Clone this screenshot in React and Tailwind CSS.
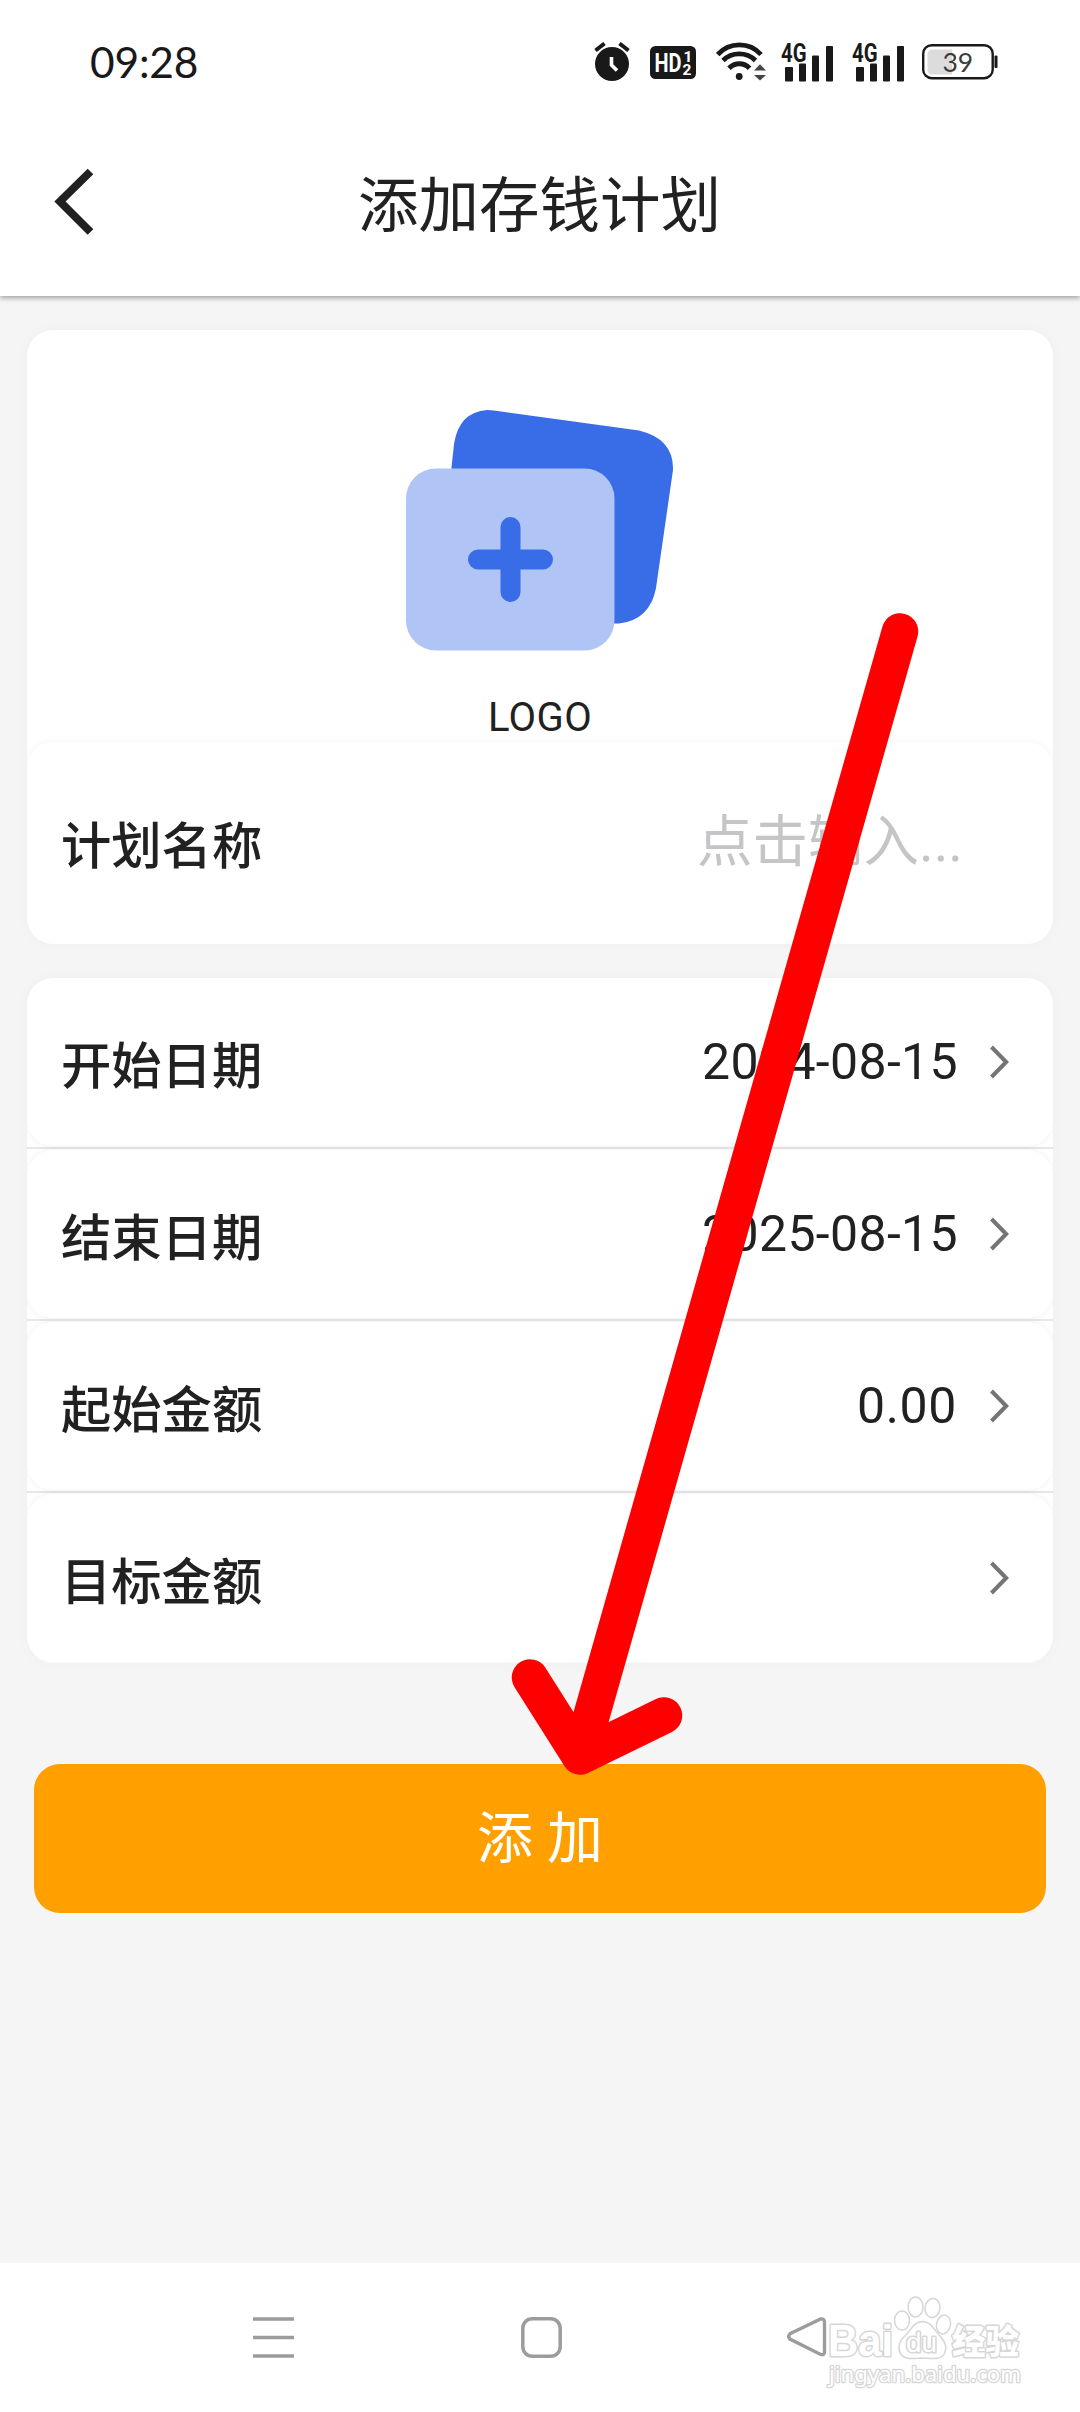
const CJK = "font-['Roboto','Noto_Sans_CJK_SC',sans-serif]";

function AlarmIcon() {
  return (
    <svg width="36" height="40" viewBox="0 0 36 40" className="shrink-0">
      <circle cx="18" cy="22" r="17" fill="#191919" />
      <path d="M1.500 8.500 10.500 1.500M34.500 8.500 25.500 1.500" stroke="#191919" strokeWidth="4" fill="none" />
      <path d="M17.500 15v8l5.500 5.500" stroke="#fff" strokeWidth="3.600" fill="none" />
    </svg>
  );
}

function HdIcon() {
  return (
    <svg width="46" height="33" viewBox="0 0 46 33" className="shrink-0">
      <rect width="46" height="33" rx="5.500" fill="#191919" />
      <g fill="#fff" fontFamily="Roboto, sans-serif" fontWeight="700">
        <text x="4.500" y="26" fontSize="25.500" textLength="27" lengthAdjust="spacingAndGlyphs">HD</text>
        <text x="33.500" y="15.500" fontSize="15.500">1</text>
        <text x="32.500" y="29" fontSize="15.500">2</text>
      </g>
    </svg>
  );
}

function WifiIcon() {
  return (
    <svg width="50" height="40" viewBox="0 0 50 40" className="shrink-0">
      <g fill="none" stroke="#191919" strokeWidth="4.800">
        <path d="M1.700 12.500C13.500-.3 33.500-.3 45 12.500" />
        <path d="M7 18.500c9-8.800 23.500-8.800 32.500 0" />
        <path d="M13 26.300c5.800-6 15-6 20.500 0" strokeWidth="5" />
      </g>
      <circle cx="23.200" cy="34.500" r="3.400" fill="#191919" />
      <path d="m38 28.500 6-6.300 6 6.300z" fill="#444" />
      <path d="m38 33 6 5.500 6-5.500z" fill="#444" />
    </svg>
  );
}

function SignalIcon() {
  return (
    <svg width="53" height="51" viewBox="0 -6 53 51" className="shrink-0">
      <g fill="#191919">
        <rect x="4" y="24" width="8" height="14.500" rx="1" />
        <rect x="18" y="20.500" width="7" height="18" rx="1" />
        <rect x="31" y="12.500" width="7" height="26" rx="1" />
        <rect x="45" y="3" width="7" height="35.500" rx="1" />
        <text x="0" y="18.500" fontFamily="Roboto, sans-serif" fontSize="25" fontWeight="700" textLength="25.500" lengthAdjust="spacingAndGlyphs" stroke="#fff" strokeWidth="2" paintOrder="stroke">4G</text>
      </g>
    </svg>
  );
}

function BatteryIcon() {
  return (
    <svg width="76" height="36" viewBox="0 0 76 36" className="shrink-0">
      <rect x="1.200" y="1.200" width="69.500" height="33" rx="8.500" fill="#fff" stroke="#191919" strokeWidth="2.400" />
      <path d="M10 5.500h20v25H10a4.500 4.500 0 0 1-4.500-4.500V10A4.500 4.500 0 0 1 10 5.500z" fill="#dcdcdc" />
      <rect x="72.500" y="11.500" width="3" height="12.500" rx="1" fill="#191919" />
      <text x="20.500" y="27.500" fontFamily="Lato, sans-serif" fontSize="26.500" fill="#3c3c3c">39</text>
    </svg>
  );
}

function Chevron() {
  return (
    <svg width="22" height="34" viewBox="0 0 22 34" className="shrink-0">
      <path d="M2.500 2 17.200 17 2.500 32" fill="none" stroke="#757575" strokeWidth="4" />
    </svg>
  );
}

function PlanLogo() {
  return (
    <svg width="268" height="242" viewBox="0 0 268 242" className="shrink-0">
      <path d="M45 62 48 34Q53 2 81 0Q85 0 88 .5L233 20.500Q268 29 267 60L250 178Q244 210 213 213.500H190L45 100Z" fill="#396de8" />
      <rect x="0" y="58.500" width="208.500" height="182" rx="30" fill="#b1c4f6" />
      <path d="M104.500 117v65M72 149.500h65" stroke="#396de8" strokeWidth="20" strokeLinecap="round" />
    </svg>
  );
}

function Row({ label, children }) {
  return (
    <div className="flex h-[168px] items-center rounded-[26px] bg-white pl-[34px] pr-[42px] shadow-[0_0_9px_rgba(0,0,0,0.06)]">
      <span className="flex-1 pt-[9px] text-[50.300px] leading-[60px] font-medium">{label}</span>
      {children}
      <Chevron />
    </div>
  );
}

function DateValue({ children }) {
  return <span className="mr-[31px] text-[50px] leading-[60px] tracking-[0.35px]">{children}</span>;
}

function AmountValue({ children }) {
  return <span className="mr-[32px] text-[50px] leading-[60px] tracking-[0.6px]">{children}</span>;
}

function Divider() {
  return <div className="my-[1px] h-[2px] bg-[#e6e6e6]" />;
}

function Watermark() {
  return (
    <svg width="204" height="100" viewBox="0 0 204 100" className="absolute left-[824px] top-[2292px]">
      <g fill="#fff" stroke="#d6d6d6" strokeWidth="1.500">
        <ellipse cx="78" cy="28.500" rx="7.500" ry="9.500" />
        <ellipse cx="91.500" cy="15" rx="7.500" ry="10" />
        <ellipse cx="108.500" cy="16" rx="7.500" ry="9.500" transform="rotate(8 108.500 16)" />
        <ellipse cx="119.500" cy="32.500" rx="7" ry="9.500" transform="rotate(12 119.500 32.500)" />
        <path d="M98.500 29.500c-9 0-12 9-17 14-7 6-8 13-5 18 4 7 13 5 22 4.500 9 .5 18 2.500 22-4.500 3-6 1-12-5-18-5-5-8-14-17-14z" />
        <g strokeWidth="3" paintOrder="stroke" strokeLinejoin="round">
          <text x="4" y="64" fontFamily="Liberation Sans, sans-serif" fontWeight="700" fontSize="44" textLength="65" lengthAdjust="spacingAndGlyphs">Bai</text>
          <text x="82" y="60" fontFamily="Liberation Sans, sans-serif" fontWeight="400" fontSize="27" textLength="31" lengthAdjust="spacingAndGlyphs">du</text>
          <text x="128" y="62" fontFamily="Noto Sans CJK SC, sans-serif" fontWeight="900" fontSize="34" textLength="67" lengthAdjust="spacingAndGlyphs">经验</text>
          <text x="5" y="90" fontFamily="Noto Sans, sans-serif" fontSize="22" strokeWidth="2.600" textLength="192" lengthAdjust="spacingAndGlyphs">jingyan.baidu.com</text>
        </g>
      </g>
    </svg>
  );
}

export default function App() {
  return (
    <div className={`relative flex h-[2412px] w-[1080px] flex-col overflow-hidden bg-[#f5f5f5] text-[#212121] ${CJK}`}>
      <header className="h-[296px] shrink-0 bg-white shadow-[0_2px_5px_rgba(0,0,0,0.35)]">
        <div className="flex h-[124px] items-center pl-[90px] pr-[82px]">
          <span className="flex-1 font-['Lato',sans-serif] text-[42.500px] leading-none tracking-[-0.2px] text-[#191919]">09:28</span>
          <AlarmIcon />
          <div className="ml-[20px] flex"><HdIcon /></div>
          <div className="ml-[20px] flex"><WifiIcon /></div>
          <div className="ml-[15px] flex"><SignalIcon /></div>
          <div className="ml-[18px] flex"><SignalIcon /></div>
          <div className="ml-[17px] flex"><BatteryIcon /></div>
        </div>
        <div className="flex h-[156px] items-center">
          <svg width="44" height="70" viewBox="0 0 44 70" className="ml-[52px] shrink-0">
            <path d="M38.500 4.500 8 34.500 38.500 65" fill="none" stroke="#212121" strokeWidth="8" />
          </svg>
          <h1 className="mr-[97px] flex-1 pt-[9px] text-center text-[60.500px] leading-[80px]">添加存钱计划</h1>
        </div>
      </header>

      <main className="flex flex-1 flex-col px-[27px] pt-[34px]">
        <section className="flex h-[614px] flex-col overflow-hidden rounded-[26px] bg-white shadow-[0_0_12px_rgba(0,0,0,0.03)]">
          <div className="flex h-[412px] flex-col items-center pt-[80px]">
            <PlanLogo />
            <span className="mt-[42px] text-[40px] leading-[48px] tracking-[0.4px]">LOGO</span>
          </div>
          <div className="flex h-[202px] items-center rounded-[26px] bg-white pl-[34px] pr-[90px] shadow-[0_0_9px_rgba(0,0,0,0.05)]">
            <span className="flex-1 pt-[8px] text-[50.300px] leading-[60px] font-medium">计划名称</span>
            <span className="text-[55.500px] leading-[70px] text-[#c5c5c7]">点击输入...</span>
          </div>
        </section>

        <section className="mt-[34px] flex h-[685px] flex-col overflow-hidden rounded-[26px] bg-white shadow-[0_0_12px_rgba(0,0,0,0.03)]">
          <Row label="开始日期"><DateValue>2024-08-15</DateValue></Row>
          <Divider />
          <Row label="结束日期"><DateValue>2025-08-15</DateValue></Row>
          <Divider />
          <Row label="起始金额"><AmountValue>0.00</AmountValue></Row>
          <Divider />
          <Row label="目标金额" />
        </section>

        <button className="mx-[7px] mt-[101px] flex h-[149px] shrink-0 items-center justify-center rounded-[26px] bg-[#ffa000] text-[56px] text-white">
          添 加
        </button>
      </main>

      <nav className="flex h-[149px] shrink-0 items-center bg-white pl-[253px]">
        <svg width="41" height="41" viewBox="0 0 41 41">
          <path d="M0 2h41M0 20.500h41M0 39h41" stroke="#9c9c9c" strokeWidth="3.600" />
        </svg>
        <svg width="41" height="41" viewBox="0 0 41 41" className="ml-[227px]">
          <rect x="1.800" y="1.800" width="37.400" height="37.400" rx="9.500" fill="none" stroke="#9c9c9c" strokeWidth="3.500" />
        </svg>
        <svg width="41" height="41" viewBox="0 0 41 41" className="ml-[225px]">
          <path d="M1.500 17 33.500 1.500Q37.500 1 37.500 5V36Q37.500 39.500 33.500 38.500L1.500 22.500Q-1 19.500 1.500 17Z" transform="translate(1.500 .5) scale(.96)" fill="none" stroke="#9c9c9c" strokeWidth="3.500" />
        </svg>
      </nav>

      <Watermark />

      <svg width="420" height="1190" viewBox="500 600 420 1190" className="absolute left-[500px] top-[600px]">
        <path d="M900 631.500 580 1756M530 1677.500 580 1756.500 664 1715.500" fill="none" stroke="#fe0000" strokeWidth="36.500" strokeLinecap="round" strokeLinejoin="round" />
      </svg>
    </div>
  );
}
